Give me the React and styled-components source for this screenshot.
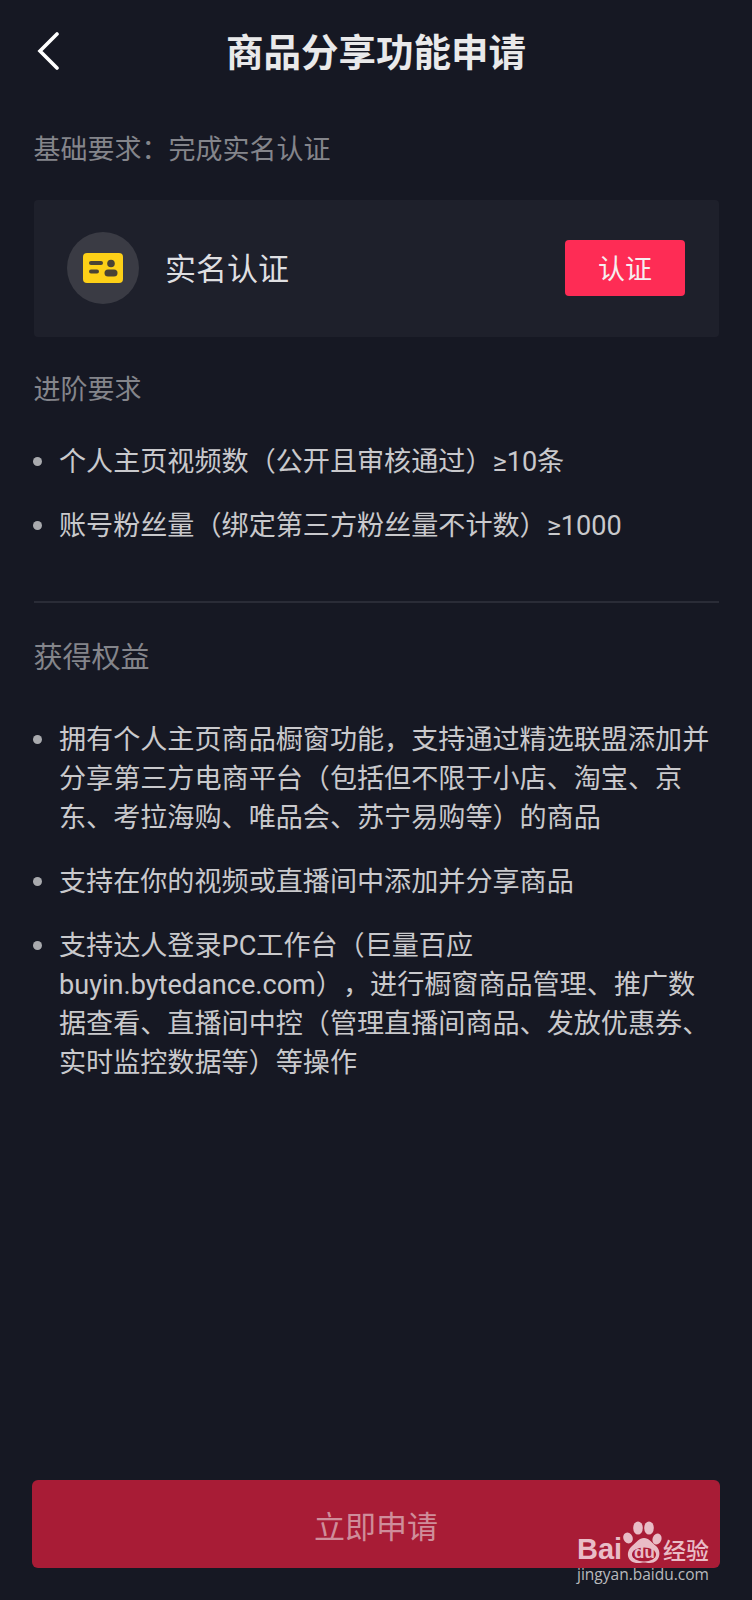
import styled, { createGlobalStyle } from "styled-components";

const GlobalStyle = createGlobalStyle`
  html, body {
    margin: 0;
    padding: 0;
    background: #161823;
  }
  body {
    font-family: "Roboto", "Noto Sans CJK SC", sans-serif;
    text-spacing-trim: space-all;
  }
`;

// full-width punctuation, kept apart so the strings below stay readable
const LP = "\uFF08";
const RP = "\uFF09";
const COMMA = "\uFF0C";
const COLON = "\uFF1A";

const advancedItems = [
  `个人主页视频数${LP}公开且审核通过${RP}≥10条`,
  `账号粉丝量${LP}绑定第三方粉丝量不计数${RP}≥1000`,
];

const benefitItems = [
  `拥有个人主页商品橱窗功能${COMMA}支持通过精选联盟添加并分享第三方电商平台${LP}包括但不限于小店、淘宝、京东、考拉海购、唯品会、苏宁易购等${RP}的商品`,
  "支持在你的视频或直播间中添加并分享商品",
  `支持达人登录PC工作台${LP}巨量百应buyin.bytedance.com${RP}${COMMA}进行橱窗商品管理、推广数据查看、直播间中控${LP}管理直播间商品、发放优惠券、实时监控数据等${RP}等操作`,
];

function BackIcon() {
  return (
    <svg width="24" height="38" viewBox="0 0 24 38" fill="none">
      <path d="M20 2 L3 19 L20 36" stroke="#fff" strokeWidth="3.6" strokeLinecap="round" strokeLinejoin="miter" />
    </svg>
  );
}

function CardIcon() {
  return (
    <svg width="40" height="30" viewBox="0 0 40 30">
      <rect width="40" height="30" rx="4" fill="#fdd017" />
      <rect x="6" y="8" width="14" height="4" rx="2" fill="#4a4334" />
      <rect x="6" y="16.5" width="10" height="4" rx="2" fill="#4a4334" />
      <circle cx="28" cy="10.5" r="3.8" fill="#4a4334" />
      <rect x="21.5" y="16.5" width="13" height="7" rx="3.5" fill="#4a4334" />
    </svg>
  );
}

// toes and palm of the watermark paw; the inner oval holds the "du"
function Paw() {
  return (
    <svg width="40" height="43" viewBox="0 0 40 43">
      <g fill="#e9bcc6">
        <ellipse cx="6" cy="18" rx="4.6" ry="5.6" transform="rotate(-25 6 18)" />
        <ellipse cx="16" cy="8" rx="4.8" ry="6.6" />
        <ellipse cx="27" cy="8" rx="4.8" ry="6.6" />
        <ellipse cx="35" cy="19" rx="4.4" ry="5.6" transform="rotate(20 35 19)" />
        <path d="M22 18c5 0 7 4 12 8 6 5 4 17-6 17-3 0-4-.6-6-.6s-3 .6-6 .6C5 43 3 32 10 26c5-4 7-8 12-8z" />
      </g>
      <ellipse cx="22" cy="34.5" rx="12" ry="7" fill="#a81c36" />
    </svg>
  );
}

export default function App() {
  return (
    <>
      <GlobalStyle />
      <Page>
        <Header>
          <BackButton>
            <BackIcon />
          </BackButton>
          <Title>商品分享功能申请</Title>
        </Header>

        <Content>
          <BasicLabel>{`基础要求${COLON}完成实名认证`}</BasicLabel>
          <VerifyCard>
            <IconCircle>
              <CardIcon />
            </IconCircle>
            <VerifyName>实名认证</VerifyName>
            <VerifyButton>认证</VerifyButton>
          </VerifyCard>

          <AdvancedLabel>进阶要求</AdvancedLabel>
          <List>
            {advancedItems.map((item) => (
              <Item key={item}>{item}</Item>
            ))}
          </List>

          <Divider />

          <BenefitLabel>获得权益</BenefitLabel>
          <BenefitList>
            {benefitItems.map((item) => (
              <Item key={item}>{item}</Item>
            ))}
          </BenefitList>
        </Content>

        <Footer>
          <ApplyButton>立即申请</ApplyButton>
        </Footer>

        <Watermark>
          <WatermarkLogo>
            <BaiText>Bai</BaiText>
            <PawBox>
              <Paw />
              <DuText>du</DuText>
            </PawBox>
            <JingyanText>经验</JingyanText>
          </WatermarkLogo>
          <WatermarkUrl>jingyan.baidu.com</WatermarkUrl>
        </Watermark>
      </Page>
    </>
  );
}

const Page = styled.div`
  position: relative;
  width: 752px;
  height: 1600px;
  background: #161823;
  display: flex;
  flex-direction: column;
  overflow: hidden;
`;

const Header = styled.header`
  position: relative;
  height: 106px;
  display: flex;
  align-items: flex-start;
  justify-content: center;
`;

const BackButton = styled.div`
  position: absolute;
  left: 37px;
  top: 32px;
  display: flex;
`;

const Title = styled.h1`
  margin: 28px 0 0;
  font-size: 37.5px;
  font-weight: 700;
  line-height: 50px;
  color: #e9e9ea;
`;

const Content = styled.main`
  flex: 1;
  padding: 0 33px 0 34px;
  display: flex;
  flex-direction: column;
`;

const SectionLabel = styled.div`
  margin-left: -0.5px;
  font-size: 27px;
  line-height: 39px;
  color: #84858b;
`;

const BasicLabel = styled(SectionLabel)`
  margin-top: 25px;
`;

const AdvancedLabel = styled(SectionLabel)`
  margin-top: 34px;
`;

const BenefitLabel = styled(SectionLabel)`
  margin-top: 36px;
  font-size: 29px;
`;

const VerifyCard = styled.section`
  margin-top: 30px;
  height: 137px;
  box-sizing: border-box;
  padding: 0 34px 0 33px;
  background: #1e202b;
  border-radius: 4px;
  display: flex;
  align-items: center;
`;

const IconCircle = styled.div`
  width: 72px;
  height: 72px;
  margin-top: -2px;
  border-radius: 50%;
  background: #3a3b44;
  display: flex;
  align-items: center;
  justify-content: center;
`;

const VerifyName = styled.div`
  flex: 1;
  margin: 2px 0 0 26px;
  font-size: 31px;
  line-height: 40px;
  color: #dfdfe1;
`;

const VerifyButton = styled.button`
  width: 120px;
  height: 56px;
  margin-top: -2px;
  padding: 0;
  border: none;
  border-radius: 4px;
  background: #fe2c55;
  color: #f6eef0;
  font-family: inherit;
  font-size: 27px;
`;

const List = styled.ul`
  margin: 33px 0 0;
  padding: 0;
  list-style: none;
  display: flex;
  flex-direction: column;
  gap: 25px;
`;

const BenefitList = styled(List)`
  margin-top: 43px;
`;

const Item = styled.li`
  position: relative;
  padding-left: 25px;
  font-size: 27.1px;
  line-height: 39px;
  color: #c9c9cc;

  &::before {
    content: "";
    position: absolute;
    left: -1px;
    top: 14px;
    width: 9px;
    height: 9px;
    border-radius: 50%;
    background: #a9aaae;
  }
`;

const Divider = styled.hr`
  margin: 55px 0 0;
  border: none;
  height: 2px;
  background: #2a2c37;
`;

const Footer = styled.footer`
  padding: 0 32px 32px;
`;

const ApplyButton = styled.button`
  width: 100%;
  height: 88px;
  padding: 0;
  border: none;
  border-radius: 6px;
  background: #a81c36;
  color: #cf8d9a;
  font-family: inherit;
  font-size: 31px;
`;

const Watermark = styled.div`
  position: absolute;
  left: 577px;
  top: 1520px;
  width: 134px;
  display: flex;
  flex-direction: column;
`;

const WatermarkLogo = styled.div`
  height: 43px;
  display: flex;
  align-items: flex-end;
  color: #e9bcc6;
`;

const BaiText = styled.span`
  width: 45px;
  font-family: "Liberation Sans", sans-serif;
  font-weight: 700;
  font-size: 29px;
  line-height: 27px;
`;

const PawBox = styled.span`
  position: relative;
  display: flex;
  width: 40px;
`;

const DuText = styled.span`
  position: absolute;
  left: 12px;
  bottom: -1px;
  font-family: "Liberation Sans", sans-serif;
  font-weight: 700;
  font-size: 17px;
  line-height: 22px;
  color: #e9bcc6;
`;

const JingyanText = styled.span`
  margin-left: 1px;
  font-family: "Noto Sans CJK SC", sans-serif;
  font-size: 23px;
  line-height: 28px;
  font-weight: 500;
`;

const WatermarkUrl = styled.div`
  margin-top: 1px;
  font-family: "Open Sans", sans-serif;
  font-size: 15.5px;
  line-height: 20px;
  white-space: nowrap;
  color: #b9babd;
`;
